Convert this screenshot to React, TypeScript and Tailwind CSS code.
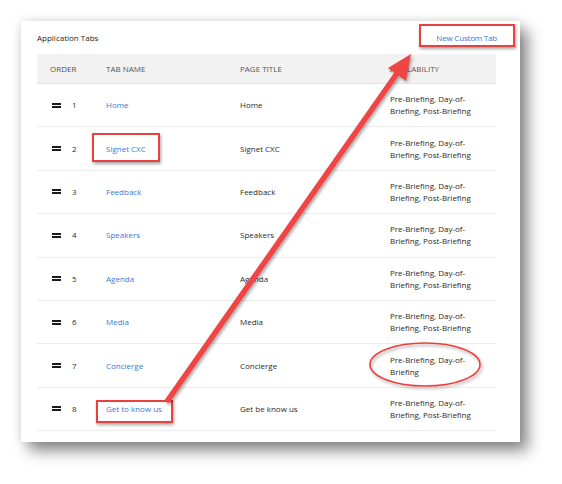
import clsx from 'clsx';

interface TabRow {
  order: number;
  name: string;
  title: string;
  availability: string;
}

const rows: TabRow[] = [
  { order: 1, name: 'Home', title: 'Home', availability: 'Pre-Briefing, Day-of-Briefing, Post-Briefing' },
  { order: 2, name: 'Signet CXC', title: 'Signet CXC', availability: 'Pre-Briefing, Day-of-Briefing, Post-Briefing' },
  { order: 3, name: 'Feedback', title: 'Feedback', availability: 'Pre-Briefing, Day-of-Briefing, Post-Briefing' },
  { order: 4, name: 'Speakers', title: 'Speakers', availability: 'Pre-Briefing, Day-of-Briefing, Post-Briefing' },
  { order: 5, name: 'Agenda', title: 'Agenda', availability: 'Pre-Briefing, Day-of-Briefing, Post-Briefing' },
  { order: 6, name: 'Media', title: 'Media', availability: 'Pre-Briefing, Day-of-Briefing, Post-Briefing' },
  { order: 7, name: 'Concierge', title: 'Concierge', availability: 'Pre-Briefing, Day-of-Briefing' },
  { order: 8, name: 'Get to know us', title: 'Get be know us', availability: 'Pre-Briefing, Day-of-Briefing, Post-Briefing' },
];

const cols = 'grid grid-cols-[56px_134px_150px_119px] items-center';

function DragHandle() {
  return (
    <span className="flex w-[9px] flex-col gap-[1px]">
      <span className="h-[2px] w-full bg-[#1a1a1a]" />
      <span className="h-[2px] w-full bg-[#1a1a1a]" />
    </span>
  );
}

function RedBox({ className }: { className: string }) {
  return (
    <div
      className={clsx(
        'pointer-events-none absolute border-2 border-[#e8413f] shadow-[1px_2px_3px_rgba(0,0,0,0.35)]',
        className
      )}
    />
  );
}

function Annotations() {
  return (
    <>
      <RedBox className="left-[419px] top-[24px] h-[23px] w-[96px]" />
      <RedBox className="left-[92px] top-[133px] h-[29px] w-[68px]" />
      <RedBox className="left-[96px] top-[400px] h-[23px] w-[77px]" />
      <svg className="pointer-events-none absolute left-0 top-0" width="562" height="484" viewBox="0 0 562 484">
        <defs>
          <filter id="sh" x="-20%" y="-20%" width="140%" height="140%">
            <feDropShadow dx="1.5" dy="2" stdDeviation="1.5" floodColor="#000" floodOpacity="0.35" />
          </filter>
        </defs>
        <ellipse cx="425" cy="364.5" rx="55" ry="21.5" fill="none" stroke="#e8413f" strokeWidth="1.6" filter="url(#sh)" />
        <g filter="url(#sh)">
          <line x1="168" y1="400" x2="398" y2="72" stroke="#ef4444" strokeWidth="5.5" strokeLinecap="round" />
          <polygon points="411,54 406,81 388,68" fill="#ef4444" />
        </g>
      </svg>
    </>
  );
}

export default function App() {
  return (
    <div className="relative h-[484px] w-[562px] overflow-hidden bg-white font-['Open_Sans',sans-serif] text-[8px] text-[#2a2a2a]">
      <div className="pl-[21px] pt-[21px]">
        <div className="h-[421px] w-[499px] bg-white shadow-[8px_9px_14px_rgba(0,0,0,0.45),0_0_10px_rgba(0,0,0,0.12)]">
          <div className="flex h-[33px] items-center justify-between pl-[16px] pr-[23px]">
            <span className="text-[#222]">Application Tabs</span>
            <a className="tracking-[-0.2px] text-[#3b78d8]">New Custom Tab</a>
          </div>
          <div className="ml-[16px] w-[459px]">
            <div className={clsx(cols, 'box-border h-[30px] border-b border-[#e2e2e2] bg-[#f2f2f2] text-[#555]')}>
              <span className="pl-[13px]">ORDER</span>
              <span className="pl-[13px]">TAB NAME</span>
              <span className="pl-[13px]">PAGE TITLE</span>
              <span className="pl-[13px]">AVAILABILITY</span>
            </div>
            {rows.map((row) => (
              <div key={row.order} className={clsx(cols, 'box-border h-[43.4px] border-b border-[#ececec]')}>
                <span className="flex items-center gap-[11px] pl-[15px]">
                  <DragHandle />
                  <span>{row.order}</span>
                </span>
                <span className="pl-[13px] text-[#3b78d8]">{row.name}</span>
                <span className="pl-[13px]">{row.title}</span>
                <span className="w-[100px] pl-[13px] leading-[12px]">{row.availability}</span>
              </div>
            ))}
          </div>
        </div>
      </div>
      <Annotations />
    </div>
  );
}
